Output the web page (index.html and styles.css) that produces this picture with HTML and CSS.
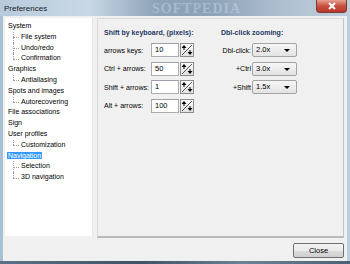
FILE: index.html
```html
<!DOCTYPE html>
<html lang="en">
<head>
    <meta charset="UTF-8">
    <title>Preferences</title>
    <link rel="stylesheet" href="styles.css">
</head>
<body>
<div class="window">
    <div class="titlebar">
        <span class="title">Preferences</span>
        <span class="watermark">SOFTPEDIA</span>
        <div class="close-x">
            <svg width="10" height="8" viewBox="0 0 10 8"><path d="M2 1 L8 7 M8 1 L2 7" stroke="#fff" stroke-width="2"/></svg>
        </div>
    </div>

    <div class="client">
        <div class="main">
            <!-- Category tree -->
            <ul class="tree">
                <li class="node">System</li>
                <li class="leaf">File system</li>
                <li class="leaf">Undo/redo</li>
                <li class="leaf last">Confirmation</li>
                <li class="node">Graphics</li>
                <li class="leaf last">Antialiasing</li>
                <li class="node">Spots and images</li>
                <li class="leaf last">Autorecovering</li>
                <li class="node">File associations</li>
                <li class="node">Sign</li>
                <li class="node">User profiles</li>
                <li class="leaf last">Customization</li>
                <li class="node"><span class="selected">Navigation</span></li>
                <li class="leaf">Selection</li>
                <li class="leaf last">3D navigation</li>
            </ul>

            <div class="panel">
                <div class="group">
                    <div class="group-title">Shift by keyboard, (pixels):</div>
                    <div class="spin-row">
                        <span class="label">arrows keys:</span>
                        <span class="edit">10</span>
                        <span class="spin"><svg width="14" height="14" viewBox="0 0 14 14"><path d="M2 12 L12 2" stroke="#555" stroke-width="1"/><path d="M4 2 L1.5 5 L6.5 5 Z M3.5 5 L4.5 5 L4.5 7 L3.5 7 Z" fill="#000"/><path d="M10 12 L7.5 9 L12.5 9 Z M9.5 9 L10.5 9 L10.5 7 L9.5 7 Z" fill="#000"/></svg></span>
                    </div>
                    <div class="spin-row">
                        <span class="label">Ctrl + arrows:</span>
                        <span class="edit">50</span>
                        <span class="spin"><svg width="14" height="14" viewBox="0 0 14 14"><path d="M2 12 L12 2" stroke="#555" stroke-width="1"/><path d="M4 2 L1.5 5 L6.5 5 Z M3.5 5 L4.5 5 L4.5 7 L3.5 7 Z" fill="#000"/><path d="M10 12 L7.5 9 L12.5 9 Z M9.5 9 L10.5 9 L10.5 7 L9.5 7 Z" fill="#000"/></svg></span>
                    </div>
                    <div class="spin-row">
                        <span class="label">Shift + arrows:</span>
                        <span class="edit">1</span>
                        <span class="spin"><svg width="14" height="14" viewBox="0 0 14 14"><path d="M2 12 L12 2" stroke="#555" stroke-width="1"/><path d="M4 2 L1.5 5 L6.5 5 Z M3.5 5 L4.5 5 L4.5 7 L3.5 7 Z" fill="#000"/><path d="M10 12 L7.5 9 L12.5 9 Z M9.5 9 L10.5 9 L10.5 7 L9.5 7 Z" fill="#000"/></svg></span>
                    </div>
                    <div class="spin-row">
                        <span class="label">Alt + arrows:</span>
                        <span class="edit">100</span>
                        <span class="spin"><svg width="14" height="14" viewBox="0 0 14 14"><path d="M2 12 L12 2" stroke="#555" stroke-width="1"/><path d="M4 2 L1.5 5 L6.5 5 Z M3.5 5 L4.5 5 L4.5 7 L3.5 7 Z" fill="#000"/><path d="M10 12 L7.5 9 L12.5 9 Z M9.5 9 L10.5 9 L10.5 7 L9.5 7 Z" fill="#000"/></svg></span>
                    </div>
                </div>

                <div class="group">
                    <div class="group-title">Dbl-click zooming:</div>
                    <div class="combo-row">
                        <span class="label">Dbl-click:</span>
                        <span class="combo">2.0x<i class="arrow"></i></span>
                    </div>
                    <div class="combo-row">
                        <span class="label">+Ctrl</span>
                        <span class="combo">3.0x<i class="arrow"></i></span>
                    </div>
                    <div class="combo-row">
                        <span class="label">+Shift</span>
                        <span class="combo">1.5x<i class="arrow"></i></span>
                    </div>
                </div>
            </div>
        </div>

        <div class="footer">
            <button class="btn">Close</button>
        </div>
    </div>
    <div class="bottom-frame"></div>
</div>
</body>
</html>
```

FILE: styles.css
```css
body {
    margin: 0;
    font-family: "Liberation Sans", Arial, sans-serif;
    font-size: 7px;
    color: #000;
}

.window {
    width: 350px;
    height: 264px;
    display: flex;
    flex-direction: column;
    background: linear-gradient(90deg, #a9bfd4 0%, #c3d4e4 30%, #9fb6cc 60%, #bccfe0 100%);
}

/* Title bar */
.titlebar {
    height: 16px;
    display: flex;
    align-items: center;
    padding-left: 4px;
    position: relative;
    overflow: hidden;
    background: linear-gradient(90deg, #b7cadc 0%, #c9d8e6 25%, #8da3b8 45%, #8ba2b8 60%, #aebfd0 80%, #c0cfdc 100%);
}

.title {
    font-size: 8px;
    color: #1a1a1a;
}

.watermark {
    position: absolute;
    left: 152px;
    top: 1px;
    font-family: "Liberation Serif", serif;
    font-size: 14px;
    line-height: 15px;
    font-weight: bold;
    letter-spacing: 1px;
    color: rgba(225, 233, 242, 0.35);
}

.close-x {
    position: absolute;
    right: 3px;
    top: 0;
    width: 31px;
    height: 13px;
    display: flex;
    align-items: center;
    justify-content: center;
    border: 1px solid #7a3a36;
    border-top: none;
    border-radius: 0 0 4px 4px;
    background: linear-gradient(#e4a193, #c9503c 50%, #b6372a);
    box-sizing: border-box;
}

/* Client area */
.client {
    flex: 1;
    margin: 0 3px;
    padding: 2px 3px 3px 2px;
    background: #f0f0f0;
    display: flex;
    flex-direction: column;
}

.main {
    display: flex;
    gap: 4px;
    height: 220px;
}

.tree {
    list-style: none;
    margin: 0;
    padding: 3px 0 0 3px;
    width: 84px;
    height: 215px;
    background: #fff;
    border-right: 1px solid #e6e6e6;
}

.tree li {
    height: 10.8px;
    line-height: 10.8px;
    white-space: nowrap;
    position: relative;
}

.tree .leaf {
    padding-left: 13px;
}

.tree .leaf::before {
    content: "";
    position: absolute;
    left: 5px;
    top: 0;
    height: 10.8px;
    border-left: 1px dotted #a0a0a0;
}

.tree .leaf.last::before {
    height: 5.5px;
}

.tree .leaf::after {
    content: "";
    position: absolute;
    left: 5px;
    top: 5.5px;
    width: 6px;
    border-top: 1px dotted #a0a0a0;
}

.selected {
    background: #3399ff;
    color: #fff;
    padding: 0 1px;
    margin-left: -1px;
}

/* Right panel */
.panel {
    flex: 1;
    display: flex;
    gap: 27px;
    padding: 10px 0 0 6px;
    border: 1px solid #dcdcdc;
    border-bottom: 2px solid #b9b9b9;
    border-right-color: #c4c4c4;
}

.group-title {
    font-weight: bold;
    color: #1e3866;
    height: 10px;
    margin-bottom: 4px;
}

.spin-row {
    display: flex;
    align-items: center;
    height: 14px;
    margin-bottom: 4.5px;
}

.spin-row .label {
    width: 47px;
}

.edit {
    width: 28px;
    height: 14px;
    box-sizing: border-box;
    border: 1px solid #abadb3;
    border-top-color: #9ca0a8;
    background: #fff;
    padding-left: 3px;
    line-height: 12px;
    font-size: 7.5px;
}

.spin {
    margin-left: 1px;
    width: 14px;
    height: 14px;
    box-sizing: border-box;
    border: 1px solid #8c8c8c;
    background: linear-gradient(#fafafa, #e2e2e2);
    display: flex;
}

.spin svg {
    margin: -1px;
}

.combo-row {
    display: flex;
    align-items: center;
    height: 14px;
    margin-bottom: 4.5px;
}

.combo-row .label {
    width: 30px;
    text-align: right;
    padding-right: 1px;
}

.combo {
    width: 45px;
    height: 14px;
    box-sizing: border-box;
    border: 1px solid #a3a3a3;
    border-radius: 2px;
    background: linear-gradient(#f6f6f6, #e3e3e3);
    padding-left: 3px;
    line-height: 12px;
    font-size: 7.5px;
    position: relative;
}

.arrow {
    position: absolute;
    right: 6px;
    top: 5px;
    border-left: 3px solid transparent;
    border-right: 3px solid transparent;
    border-top: 3px solid #000;
}

/* Footer */
.footer {
    display: flex;
    justify-content: flex-end;
    padding-top: 5px;
}

.btn {
    width: 51px;
    height: 15px;
    padding: 0;
    font-family: "Liberation Sans", Arial, sans-serif;
    font-size: 7.5px;
    color: #000;
    border: 1px solid #707070;
    border-radius: 2px;
    background: linear-gradient(#f2f2f2 0%, #ebebeb 50%, #dddddd 51%, #cfcfcf 100%);
}

.bottom-frame {
    height: 3px;
    background: linear-gradient(90deg, #5a7187, #3f5366 40%, #6c8296 70%, #4b6074);
}
```
